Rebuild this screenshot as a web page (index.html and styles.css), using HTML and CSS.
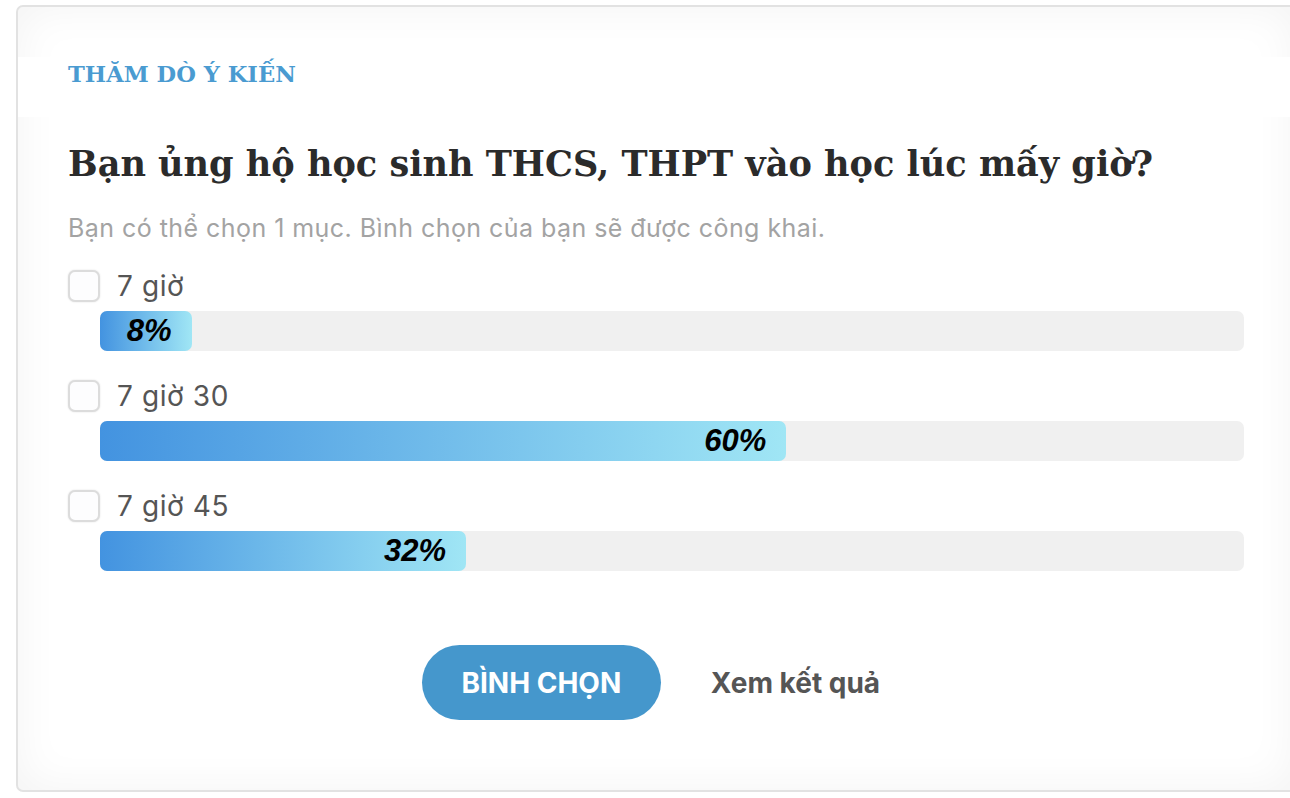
FILE: index.html
```html
<!doctype html>
<html lang="vi">
  <head>
    <meta charset="UTF-8" />
    <title>Thăm dò ý kiến</title>
    <link rel="stylesheet" href="styles.css">
  </head>
  <body>
    <div class="poll">
      <div class="poll-head">
        <h2>THĂM DÒ Ý KIẾN</h2>
      </div>

      <h1 class="poll-title">Bạn ủng hộ học sinh THCS, THPT vào học lúc mấy giờ?</h1>
      <p class="poll-note">Bạn có thể chọn 1 mục. Bình chọn của bạn sẽ được công khai.</p>

      <!-- Options -->
      <div class="poll-options">
        <div class="option">
          <label class="option-row">
            <input type="checkbox" name="poll-time" value="7h" />
            <span>7 giờ</span>
          </label>
          <div class="bar">
            <div class="bar-fill" style="width: 8%">8%</div>
          </div>
        </div>

        <div class="option">
          <label class="option-row">
            <input type="checkbox" name="poll-time" value="7h30" />
            <span>7 giờ 30</span>
          </label>
          <div class="bar">
            <div class="bar-fill" style="width: 60%">60%</div>
          </div>
        </div>

        <div class="option">
          <label class="option-row">
            <input type="checkbox" name="poll-time" value="7h45" />
            <span>7 giờ 45</span>
          </label>
          <div class="bar">
            <div class="bar-fill" style="width: 32%">32%</div>
          </div>
        </div>
      </div>

      <div class="poll-actions">
        <button class="vote">BÌNH CHỌN</button>
        <a class="results" href="#">Xem kết quả</a>
      </div>
    </div>
  </body>
</html>
```

FILE: styles.css
```css
html,
body {
  overflow: hidden;
}

body {
  margin: 0;
  padding: 5px 0 0 16px;
  background: #fff;
  font-family: Inter, "Noto Sans", sans-serif;
  color: #333;
}

.poll {
  width: 1176px;
  height: 663px;
  padding: 50px 50px 70px;
  border: 2px solid #e2e2e2;
  border-radius: 7px;
  background: #fff;
  box-shadow: inset 0 0 45px rgba(0, 0, 0, 0.05);
}

.poll-head {
  margin: 0 -50px;
  padding: 0 50px;
  height: 60px;
  background: #fff;
}

.poll-head h2 {
  margin: 0;
  font-family: "DejaVu Serif", serif;
  font-size: 22.6px;
  line-height: 34px;
  font-weight: 700;
  color: #4a9bd1;
}

.poll-title {
  margin: 23px 0 0;
  font-family: "DejaVu Serif", serif;
  font-size: 35.1px;
  line-height: 48px;
  font-weight: 700;
  color: #2b2b2b;
}

.poll-note {
  margin: 25px 0 0;
  font-size: 25px;
  line-height: 30px;
  letter-spacing: 0.45px;
  color: #a3a3a3;
}

.poll-options {
  margin-top: 27px;
}

.option + .option {
  margin-top: 29px;
}

.option-row {
  display: flex;
  align-items: center;
  height: 32px;
  font-size: 28px;
  letter-spacing: 0.6px;
  color: #555;
  cursor: pointer;
}

.option-row input {
  appearance: none;
  margin: 0 17px 0 0;
  width: 32px;
  height: 32px;
  border: 2px solid #dcdcdc;
  border-radius: 7px;
  background: #fdfdfe;
  box-shadow: 0 0 2px rgba(0, 0, 0, 0.12);
}

.bar {
  margin: 9px 0 0 32px;
  height: 40px;
  border-radius: 7px;
  background: #f0f0f0;
}

.bar-fill {
  box-sizing: border-box;
  height: 100%;
  padding-right: 20px;
  border-radius: 7px;
  background: linear-gradient(to right, #4393e0, #a0e6f5);
  font-family: "Liberation Sans", Arial, sans-serif;
  font-size: 31px;
  font-weight: 700;
  font-style: italic;
  line-height: 40px;
  text-align: right;
  color: #000;
}

.poll-actions {
  display: flex;
  justify-content: center;
  align-items: center;
  gap: 50px;
  margin-top: 74px;
  padding-right: 10px;
}

.vote {
  width: 239px;
  height: 75px;
  border: none;
  border-radius: 38px;
  background: #4597cc;
  color: #fff;
  font-family: Inter, sans-serif;
  font-size: 28px;
  font-weight: 700;
  cursor: pointer;
}

.results {
  font-size: 28px;
  font-weight: 700;
  color: #555;
  text-decoration: none;
}
```
